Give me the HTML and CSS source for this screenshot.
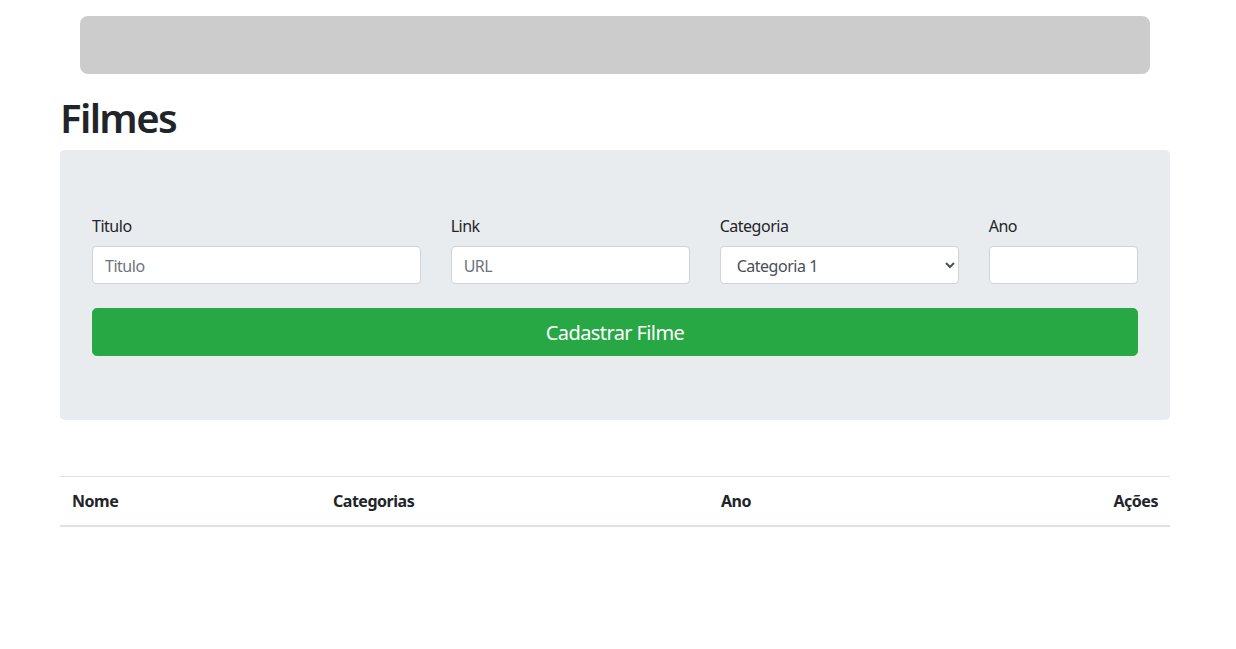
FILE: index.html
```html
<!DOCTYPE html>
<html lang="pt-BR">
<head>
<meta charset="utf-8">
<title>Filmes</title>
<link rel="stylesheet" href="styles.css">
</head>
<body>
<div class="container">
  <div class="topbar"></div>
  <h1 class="title">Filmes</h1>
  <div class="jumbotron">
    <form class="form">
      <div class="form-row">
        <div class="field col-4">
          <label for="titulo">Titulo</label>
          <input id="titulo" class="control" type="text" placeholder="Titulo">
        </div>
        <div class="field col-3">
          <label for="link">Link</label>
          <input id="link" class="control" type="text" placeholder="URL">
        </div>
        <div class="field col-3">
          <label for="categoria">Categoria</label>
          <select id="categoria" class="control select">
            <option>Categoria 1</option>
            <option>Categoria 2</option>
          </select>
        </div>
        <div class="field col-2">
          <label for="ano">Ano</label>
          <input id="ano" class="control" type="text">
        </div>
      </div>
      <button type="button" class="btn-success">Cadastrar Filme</button>
    </form>
  </div>
  <table class="table">
    <thead>
      <tr>
        <th class="c-nome">Nome</th>
        <th class="c-cat">Categorias</th>
        <th class="c-ano">Ano</th>
        <th class="c-acoes">Ações</th>
      </tr>
    </thead>
    <tbody></tbody>
  </table>
</div>
</body>
</html>
```
FILE: styles.css
```css
* { box-sizing: border-box; }
html, body { margin: 0; padding: 0; background: #fff; }
body {
  font-family: "Noto Sans", "Open Sans", "Liberation Sans", sans-serif;
  font-size: 16px;
  line-height: 1.5;
  letter-spacing: -0.03em;
  color: #212529;
}
.container {
  width: 1110px;
  margin-left: 60px;
}
.topbar {
  margin: 16px 20px 0;
  height: 58px;
  background: #cccccc;
  border-radius: 8px;
}
.title {
  margin: 20px 0 8px;
  font-size: 40px;
  line-height: 48px;
  font-weight: 600;
  letter-spacing: -0.04em;
}
.jumbotron {
  background: #e9ecef;
  border-radius: 4.8px;
  padding: 64px 32px;
}
.form-row {
  display: flex;
  margin: 0 -15px;
}
.field {
  padding: 0 15px;
  display: flex;
  flex-direction: column;
}
.col-4 { width: 33.3333%; }
.col-3 { width: 25%; }
.col-2 { width: 16.6667%; }
label {
  display: block;
  margin-bottom: 8px;
  line-height: 24px;
}
.control {
  display: block;
  width: 100%;
  height: 38px;
  padding: 7px 12px 5px;
  font-family: inherit;
  font-size: 16px;
  letter-spacing: -0.03em;
  line-height: 24px;
  color: #495057;
  background: #fff;
  border: 1px solid #ced4da;
  border-radius: 4px;
}
.control::placeholder { color: #6c757d; }
.select { padding-left: 12px; }
.btn-success {
  display: block;
  width: 100%;
  margin-top: 24px;
  height: 48px;
  padding: 9px 16px 7px;
  font-family: inherit;
  font-size: 20px;
  letter-spacing: -0.03em;
  line-height: 30px;
  color: #fff;
  background: #28a745;
  border: 1px solid #28a745;
  border-radius: 4.8px;
}
.table {
  width: 100%;
  margin-top: 56px;
  border-collapse: collapse;
}
.table th {
  padding: 12px;
  font-weight: 700;
  text-align: left;
  line-height: 24px;
  border-top: 1px solid #dee2e6;
  border-bottom: 2px solid #dee2e6;
}
.c-nome { width: 261px; }
.c-cat { width: 388px; }
.table .c-acoes { text-align: right; width: 100px; }
```
